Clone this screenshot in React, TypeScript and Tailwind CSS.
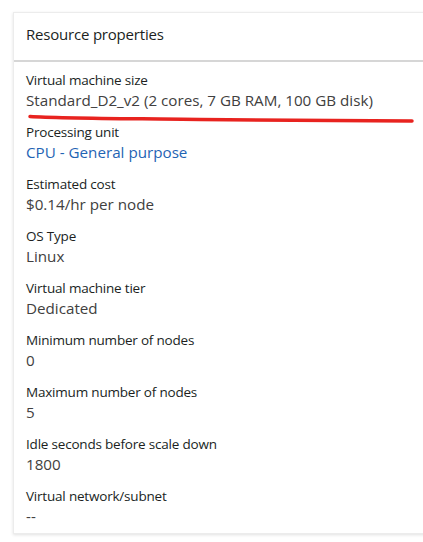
import React from "react";

const rows: { label: string; value: string; link?: boolean }[] = [
  { label: "Virtual machine size", value: "Standard_D2_v2 (2 cores, 7 GB RAM, 100 GB disk)" },
  { label: "Processing unit", value: "CPU - General purpose", link: true },
  { label: "Estimated cost", value: "$0.14/hr per node" },
  { label: "OS Type", value: "Linux" },
  { label: "Virtual machine tier", value: "Dedicated" },
  { label: "Minimum number of nodes", value: "0" },
  { label: "Maximum number of nodes", value: "5" },
  { label: "Idle seconds before scale down", value: "1800" },
  { label: "Virtual network/subnet", value: "--" },
];

export default function App() {
  return (
    <div
      className="relative h-[542px] w-[423px] overflow-hidden bg-white pt-[12px] pl-[13px]"
      style={{ fontFamily: '"Open Sans", "Noto Sans", sans-serif' }}
    >
      <div className="w-[420px] border border-[#ececec] bg-white shadow-[0_1px_3px_rgba(0,0,0,0.12)]">
        {/* Header */}
        <div className="flex h-[49px] items-center border-b-2 border-[#d6d6d6] pl-[12px] pb-[5px]">
          <span className="text-[15px] text-[#201f1e] tracking-[-0.2px]">Resource properties</span>
        </div>

        {/* Property list */}
        <div className="flex flex-col gap-[12px] pt-[8px] pb-[7px] pl-[12px]">
          {rows.map((r) => (
            <div key={r.label} className="flex flex-col">
              <span className="text-[13.5px] leading-[20px] text-[#201f1e] tracking-[-0.2px]">{r.label}</span>
              <span
                className={
                  "text-[15.2px] leading-[20px] " +
                  (r.link ? "text-[#1f64b4]" : "text-[#414040]")
                }
              >
                {r.value}
              </span>
            </div>
          ))}
        </div>
      </div>

      {/* Red annotation stroke */}
      <svg className="pointer-events-none absolute left-0 top-0" width="423" height="542">
        <path
          d="M30 116.5 C 60 118.5, 120 118.5, 200 119.5 S 360 121, 412 121"
          stroke="#e8231f"
          strokeWidth="3.5"
          strokeLinecap="round"
          fill="none"
        />
      </svg>
    </div>
  );
}
